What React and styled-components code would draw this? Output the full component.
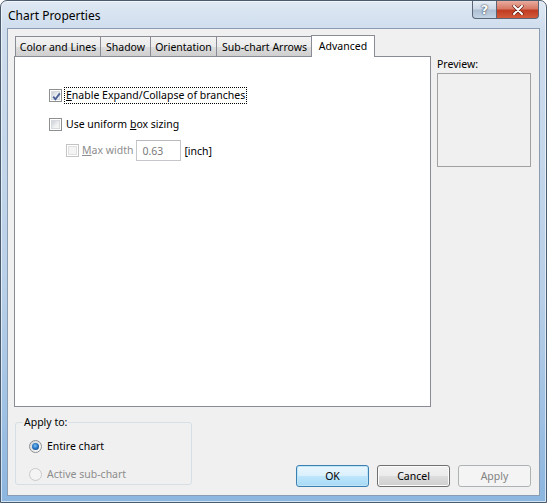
import React from "react";
import styled, { createGlobalStyle } from "styled-components";

const GlobalStyle = createGlobalStyle`
  html, body { margin: 0; padding: 0; background: #ffffff; }
  body { font-family: "Noto Sans", "Liberation Sans", sans-serif; font-size: 10.5px; color: #000; }
`;

const Window = styled.div`
  width: 547px;
  height: 503px;
  box-sizing: border-box;
  display: flex;
  flex-direction: column;
  border: 1px solid #4b5b6e;
  border-radius: 7px 7px 0 0;
  padding: 0 6px 6px;
  background: linear-gradient(180deg, #dfe9f4 0px, #cfdded 28px, #b7cfe8 60%, #8cb6e0 100%);
  box-shadow: inset 0 0 0 1px rgba(255, 255, 255, 0.6);
`;

const TitleBar = styled.div`
  height: 27px;
  display: flex;
  align-items: flex-start;
  justify-content: space-between;
`;

const Title = styled.div`
  font-size: 12px;
  padding: 6px 0 0 1px;
  color: #000;
`;

const CaptionButtons = styled.div`
  display: flex;
  margin-right: 1px;
`;

const CaptionButton = styled.div`
  width: ${(p) => p.$w}px;
  height: 18px;
  box-sizing: border-box;
  border: 1px solid #5a6675;
  border-top: none;
  display: flex;
  align-items: center;
  justify-content: center;
  background: ${(p) =>
    p.$close
      ? "linear-gradient(180deg, #e9ab9e 0%, #d87a66 45%, #c03c22 55%, #d45a3a 100%)"
      : "linear-gradient(180deg, #e6edf5 0%, #cdd9e6 45%, #aebfd3 55%, #c3d4e6 100%)"};
  border-radius: ${(p) => (p.$close ? "0 0 4px 0" : "0 0 0 4px")};
  ${(p) => p.$close && "border-left: none;"}
`;

const HelpGlyph = styled.span`
  font-family: "DejaVu Sans", sans-serif;
  font-weight: bold;
  font-size: 13px;
  color: #ffffff;
  text-shadow: 0 0 2px #3a4756, 0 0 1px #3a4756;
  line-height: 1;
`;

const Client = styled.div`
  flex: 1;
  background: #f0f0f0;
  border: 1px solid #8a9cb2;
  display: flex;
  flex-direction: column;
  padding: 6px 8px 8px 6px;
`;

const MainRow = styled.div`
  display: flex;
  gap: 6px;
`;

const TabsColumn = styled.div`
  width: 417px;
  display: flex;
  flex-direction: column;
`;

const TabStrip = styled.div`
  height: 21px;
  display: flex;
  align-items: flex-end;
  padding-left: 1px;
  position: relative;
  z-index: 1;
`;

const Tab = styled.div`
  box-sizing: border-box;
  width: ${(p) => p.$w}px;
  height: ${(p) => (p.$active ? 22 : 20)}px;
  margin-left: ${(p) => (p.$first ? 0 : p.$active ? -2 : -1)}px;
  margin-bottom: ${(p) => (p.$active ? -1 : 0)}px;
  border: 1px solid #898c95;
  border-bottom: none;
  background: ${(p) =>
    p.$active ? "#ffffff" : "linear-gradient(180deg, #f3f3f3 0%, #ebebeb 50%, #dddddd 51%, #cfcfcf 100%)"};
  display: flex;
  justify-content: center;
  padding-top: 3px;
  font-size: 10.5px;
  white-space: nowrap;
`;

const Panel = styled.div`
  box-sizing: border-box;
  height: 351px;
  background: #ffffff;
  border: 1px solid #898c95;
  padding: 32px 0 0 34px;
  display: flex;
  flex-direction: column;
  gap: 16px;
`;

const PreviewColumn = styled.div`
  display: flex;
  flex-direction: column;
  padding-top: 22px;
`;

const PreviewLabel = styled.div`
  height: 16px;
`;

const PreviewBox = styled.div`
  width: 94px;
  height: 94px;
  box-sizing: border-box;
  border: 1px solid #a0a0a0;
  background: #f0f0f0;
`;

const OptionRow = styled.label`
  display: flex;
  align-items: center;
  gap: ${(p) => p.$gap ?? 3}px;
  height: 13px;
  margin-left: ${(p) => p.$indent ?? 0}px;
  margin-top: ${(p) => p.$mt ?? 0}px;
  color: ${(p) => (p.$disabled ? "#8d8d8d" : "#000")};
`;

const CheckBox = styled.span`
  width: 13px;
  height: 13px;
  box-sizing: border-box;
  flex: none;
  border: 1px solid ${(p) => (p.$disabled ? "#c4c4c4" : "#8e8f8f")};
  background: #ffffff;
  padding: 1px;
  display: flex;
  position: relative;
`;

const CheckInner = styled.span`
  flex: 1;
  background: ${(p) =>
    p.$disabled ? "#f4f4f4" : "linear-gradient(135deg, #cbcfd5 0%, #eef0f2 60%, #f6f6f6 100%)"};
  border: 1px solid ${(p) => (p.$disabled ? "#e0e0e0" : "#d6d9dd")};
`;

const CheckMark = styled.svg`
  position: absolute;
  left: 1px;
  top: 1px;
`;

const LabelText = styled.span`
  padding: 1px 1px;
  outline: ${(p) => (p.$focus ? "1px dotted #000" : "none")};
  outline-offset: 0;
  line-height: 13px;
  white-space: nowrap;
`;

const Key = styled.span`
  text-decoration: underline;
`;

const NumberInput = styled.div`
  width: 45px;
  height: 21px;
  box-sizing: border-box;
  border: 1px solid #c5c7cb;
  border-top-color: #b8bac0;
  background: #ffffff;
  color: #7a7a7a;
  padding: 3px 0 0 5px;
  margin: 0 1px 0 0;
`;

const Unit = styled.span`
  color: #000;
`;

const BottomRow = styled.div`
  margin-top: auto;
  display: flex;
  align-items: flex-end;
  justify-content: space-between;
  padding-left: 1px;
`;

const Group = styled.fieldset`
  margin: 0 0 2px;
  width: 177px;
  height: 70px;
  box-sizing: border-box;
  border: 1px solid #d5dfe5;
  border-radius: 3px;
  padding: 11px 0 0 13px;
  display: flex;
  flex-direction: column;
  gap: 15px;
`;

const Legend = styled.legend`
  padding: 0 1px;
  margin-left: -6px;
  font-size: 10.5px;
`;

const Radio = styled.span`
  width: 13px;
  height: 13px;
  box-sizing: border-box;
  flex: none;
  border-radius: 50%;
  border: 1px solid ${(p) => (p.$disabled ? "#cacaca" : "#8e8f8f")};
  background: ${(p) =>
    p.$disabled ? "#f4f4f4" : "linear-gradient(135deg, #d0d3d8 0%, #f2f2f2 70%, #ffffff 100%)"};
  display: flex;
  align-items: center;
  justify-content: center;
`;

const RadioDot = styled.span`
  width: 7px;
  height: 7px;
  border-radius: 50%;
  background: radial-gradient(circle at 45% 40%, #7fc4f4 0%, #2a77c4 45%, #0e3b78 100%);
`;

const Buttons = styled.div`
  display: flex;
  gap: 8px;
`;

const Button = styled.div`
  width: 73px;
  height: 22px;
  box-sizing: border-box;
  border-radius: 3px;
  display: flex;
  align-items: center;
  justify-content: center;
  border: 1px solid ${(p) => (p.$default ? "#3c7fb1" : p.$disabled ? "#adb2b5" : "#707070")};
  color: ${(p) => (p.$disabled ? "#838383" : "#000")};
  background: ${(p) =>
    p.$default
      ? "linear-gradient(180deg, #eaf6fd 0%, #d9f0fc 50%, #bee6fd 51%, #a7d9f5 100%)"
      : p.$disabled
      ? "#f4f4f4"
      : "linear-gradient(180deg, #f2f2f2 0%, #ebebeb 50%, #dddddd 51%, #cfcfcf 100%)"};
  box-shadow: ${(p) =>
    p.$disabled ? "none" : p.$default ? "inset 0 0 0 1px #bde4f7" : "inset 0 0 0 1px #fcfcfc"};
`;

function Check({ checked, disabled }) {
  return (
    <CheckBox $disabled={disabled}>
      <CheckInner $disabled={disabled} />
      {checked && (
        <CheckMark width="11" height="11" viewBox="0 0 11 11">
          <path d="M2.2 5.6 L4.4 8.2 L8.8 2.4" fill="none" stroke="#4a5f97" strokeWidth="1.8" />
        </CheckMark>
      )}
    </CheckBox>
  );
}

const tabs = [
  { label: "Color and Lines", w: 86 },
  { label: "Shadow", w: 51 },
  { label: "Orientation", w: 67 },
  { label: "Sub-chart Arrows", w: 97 },
  { label: "Advanced", w: 64, active: true },
];

export default function App() {
  return (
    <>
      <GlobalStyle />
      <Window>
        <TitleBar>
          <Title>Chart Properties</Title>
          <CaptionButtons>
            <CaptionButton $w={25}>
              <HelpGlyph>?</HelpGlyph>
            </CaptionButton>
            <CaptionButton $w={42} $close>
              <svg width="12" height="10" viewBox="0 0 12 10">
                <path d="M2 1 L10 9 M10 1 L2 9" stroke="#5a1a10" strokeWidth="3.2" strokeLinecap="round" />
                <path d="M2 1 L10 9 M10 1 L2 9" stroke="#ffffff" strokeWidth="2" strokeLinecap="round" />
              </svg>
            </CaptionButton>
          </CaptionButtons>
        </TitleBar>
        <Client>
          <MainRow>
            <TabsColumn>
              <TabStrip>
                {tabs.map((t, i) => (
                  <Tab key={t.label} $w={t.w} $first={i === 0} $active={t.active}>
                    {t.label}
                  </Tab>
                ))}
              </TabStrip>
              <Panel>
                <OptionRow>
                  <Check checked />
                  <LabelText $focus>
                    <Key>E</Key>nable Expand/Collapse of branches
                  </LabelText>
                </OptionRow>
                <OptionRow>
                  <Check />
                  <LabelText>
                    Use uniform <Key>b</Key>ox sizing
                  </LabelText>
                </OptionRow>
                <OptionRow $indent={17} $mt={-3} $disabled $gap={2}>
                  <Check disabled />
                  <LabelText>
                    <Key>M</Key>ax width
                  </LabelText>
                  <NumberInput>0.63</NumberInput>
                  <Unit>[inch]</Unit>
                </OptionRow>
              </Panel>
            </TabsColumn>
            <PreviewColumn>
              <PreviewLabel>Preview:</PreviewLabel>
              <PreviewBox />
            </PreviewColumn>
          </MainRow>
          <BottomRow>
            <Group>
              <Legend>Apply to:</Legend>
              <OptionRow $gap={4}>
                <Radio>
                  <RadioDot />
                </Radio>
                <LabelText>Entire chart</LabelText>
              </OptionRow>
              <OptionRow $disabled $gap={4}>
                <Radio $disabled />
                <LabelText>Active sub-chart</LabelText>
              </OptionRow>
            </Group>
            <Buttons>
              <Button $default>OK</Button>
              <Button>Cancel</Button>
              <Button $disabled>Apply</Button>
            </Buttons>
          </BottomRow>
        </Client>
      </Window>
    </>
  );
}
